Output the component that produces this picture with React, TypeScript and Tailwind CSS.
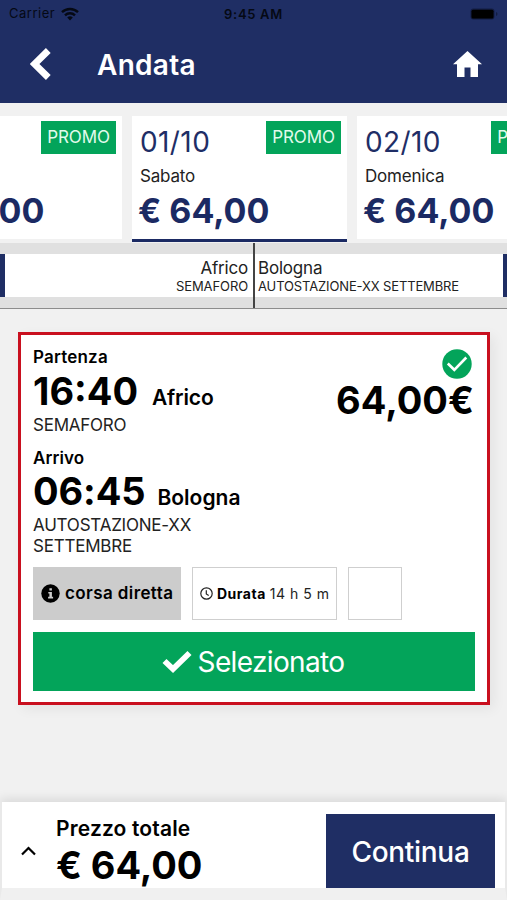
import React from "react";

type DayProps = { date?: string; day?: string; price: string; selected?: boolean };

function DayCard({ date, day, price, selected }: DayProps) {
  return (
    <div
      className={
        "h-[126px] w-[215px] shrink-0 border-b-[3px] bg-white " +
        (selected ? "border-[#1b2a63]" : "border-[#f1f1f1]")
      }
    >
      <div className="flex h-[47px] justify-between pl-[8px]">
        <span className="pt-[12px] text-[28px] leading-[28px] tracking-[0.4px] text-[#1f2e66]">{date}</span>
        <span className="mt-[5px] mr-[6px] flex h-[33px] w-[75px] items-center justify-center bg-[#03a45a] text-[17px] tracking-[-0.1px] text-[#e2fbec]">
          PROMO
        </span>
      </div>
      <div className="h-[25px] pl-[8px] text-[17px] leading-[26px] tracking-[-0.2px] text-[#222]">{day}</div>
      <div className="pt-[4px] pl-[6px] text-[34px] leading-[37px] font-bold text-[#1b2a63]">{price}</div>
    </div>
  );
}

function StatusBar() {
  return (
    <div className="flex h-[28px] items-center pr-[9px] pl-[9px] text-[13px] text-[#050914]">
      <div className="flex w-[166px] items-center gap-[6px]">
        <span className="tracking-[0.5px]">Carrier</span>
        <svg width="18" height="14" viewBox="0 0 18 14" fill="none" stroke="currentColor" strokeWidth="2.4">
          <path d="M1 5.2a11.5 11.5 0 0 1 16 0M4 8.3a7.2 7.2 0 0 1 10 0" />
          <path d="M9 13.6 6.2 10.6a4 4 0 0 1 5.6 0z" fill="currentColor" stroke="none" />
        </svg>
      </div>
      <div className="flex-1 pt-px text-center font-semibold tracking-[0.7px]">9:45 AM</div>
      <div className="flex w-[166px] items-center justify-end">
        <svg width="28" height="12" viewBox="0 0 28 12">
          <rect x="0.5" y="0.5" width="24" height="11" rx="3" fill="#131d42" />
          <rect x="1.5" y="1.7" width="22" height="8.8" rx="1.5" fill="#000" />
          <path d="M26 4v4q1.500-.5 1.500-2t-1.500-2" fill="#131d42" />
        </svg>
      </div>
    </div>
  );
}

export default function App() {
  return (
    <div className="flex h-[900px] w-[507px] flex-col overflow-hidden bg-[#f1f1f1] font-['Inter','Liberation_Sans',sans-serif] text-black">
      <header className="h-[103px] shrink-0 bg-[#1f2e64]">
        <StatusBar />
        <div className="flex h-[72px] items-center pr-[25px] pl-[30px]">
          <svg width="21" height="32" viewBox="0 0 21 32" className="shrink-0">
            <path d="M18.300 2.500 4.500 16l13.800 13.500" fill="none" stroke="#fff" strokeWidth="6.800" />
          </svg>
          <h1 className="ml-[46px] flex-1 pt-[2px] text-[28px] leading-[32px] font-semibold tracking-[0.3px] text-white">
            Andata
          </h1>
          <svg width="29" height="26" viewBox="0 0 29 26" fill="#fff" className="shrink-0">
            <path d="M14.500 0 29 13.300h-4V26h-7.500v-9.500h-6V26H4V13.300H0z" />
          </svg>
        </div>
      </header>

      <section className="flex h-[140px] shrink-0 pt-[13px]">
        <div className="-ml-[93px] flex gap-[10px]">
          <DayCard price="€ 64,00" />
          <DayCard date="01/10" day="Sabato" price="€ 64,00" selected />
          <DayCard date="02/10" day="Domenica" price="€ 64,00" />
        </div>
      </section>

      <section className="flex h-[66px] shrink-0 border-b border-[#8d8d8d] bg-[#e0e0e0] text-[#222]">
        <div className="flex w-[255px] items-stretch border-r-2 border-[#444] py-[11px]">
          <div className="w-[5px] bg-[#1f2e64]" />
          <div className="flex-1 bg-white pt-[4px] pr-[5px] text-right">
            <div className="text-[17px] leading-[21px] tracking-[-0.2px]">Africo</div>
            <div className="text-[13px] leading-[15px] tracking-[-0.1px]">SEMAFORO</div>
          </div>
        </div>
        <div className="flex flex-1 items-stretch py-[11px]">
          <div className="flex-1 bg-white pt-[4px] pl-[3px]">
            <div className="text-[17px] leading-[21px] tracking-[-0.2px]">Bologna</div>
            <div className="text-[13px] leading-[15px] tracking-[-0.13px]">AUTOSTAZIONE-XX SETTEMBRE</div>
          </div>
          <div className="w-[4px] bg-[#1f2e64]" />
        </div>
      </section>

      <main className="flex-1 px-[18px] pt-[23px]">
        <div className="h-[373px] w-[472px] border-[3px] border-[#c9101f] bg-white px-[12px] pt-[12px] shadow-[4px_4px_12px_rgba(0,0,0,0.06)]">
          <div className="flex h-[220px] justify-between">
            <div className="w-[240px]">
              <div className="text-[17px] leading-[20px] font-semibold tracking-[0.2px]">Partenza</div>
              <div className="flex h-[48px] items-baseline gap-[14px] leading-[48px] font-semibold">
                <span className="text-[38px] font-bold">16:40</span>
                <span className="text-[21px] tracking-[-0.15px]">Africo</span>
              </div>
              <div className="text-[17px] leading-[20px] tracking-[-0.25px] text-[#222]">SEMAFORO</div>
              <div className="mt-[13px] text-[17px] leading-[20px] font-semibold tracking-[0.1px]">Arrivo</div>
              <div className="flex h-[47px] items-baseline gap-[12px] leading-[47px] font-semibold">
                <span className="text-[38px] font-bold tracking-[-0.1px]">06:45</span>
                <span className="text-[21px]">Bologna</span>
              </div>
              <div className="w-[200px] text-[17px] leading-[21px] tracking-[-0.22px] text-[#222]">
                AUTOSTAZIONE-XX SETTEMBRE
              </div>
            </div>
            <div className="flex flex-col items-end">
              <svg width="30" height="30" viewBox="0 0 30 30" className="mt-[2px] mr-[3px]">
                <circle cx="15" cy="15" r="14.700" fill="#03a45a" />
                <path d="M5.800 14.500 12.300 20.800 24.300 8.500" fill="none" stroke="#fff" strokeWidth="2.600" />
              </svg>
              <div className="mt-px mr-px text-[38px] leading-[41px] font-bold">64,00€</div>
            </div>
          </div>
          <div className="flex h-[53px] gap-[11px]">
            <div className="flex w-[148px] items-center bg-[#ccc] pl-[8px]">
              <svg width="19" height="19" viewBox="0 0 19 19">
                <circle cx="9.500" cy="9.500" r="9.200" />
                <path d="M8.400 4.200h2.500v2.300H8.400zM7.300 8h3.600v4.800h1.200v1.600H7.100v-1.600h1.300V9.600H7.300z" fill="#ccc" />
              </svg>
              <span className="ml-[5px] pt-px text-[17px] font-semibold tracking-[0.4px] whitespace-nowrap">
                corsa diretta
              </span>
            </div>
            <div className="flex w-[145px] items-center border-[1.5px] border-[#cfcfcf] pl-[7px] text-[14px] whitespace-nowrap">
              <svg width="13" height="13" viewBox="0 0 13 13" fill="none" stroke="#222" strokeWidth="1.200">
                <circle cx="6.500" cy="6.500" r="5.700" />
                <path d="M6.300 3.200v3.800l2.400 1.400" />
              </svg>
              <span className="ml-[4px] font-bold tracking-[0.5px]">Durata</span>
              <span className="ml-[4px] tracking-[0.5px] text-[#222]">14 h 5 m</span>
            </div>
            <div className="w-[54px] border-[1.5px] border-[#cfcfcf]" />
          </div>
          <div className="mt-[12px] flex h-[59px] items-center justify-center bg-[#03a45a] pr-[2px] text-white">
            <svg width="30" height="23" viewBox="0 0 30 23" className="mr-[6px]">
              <path d="M2.500 11 11 19 27.500 3" fill="none" stroke="#fff" strokeWidth="5.800" />
            </svg>
            <span className="text-[28px] leading-[32px] tracking-[-0.65px]">Selezionato</span>
          </div>
        </div>
      </main>

      <footer className="flex h-[98px] shrink-0 border-x-2 border-b-[12px] border-x-[#e9e9e9] border-b-[#f0f0f0] bg-white shadow-[0_-3px_10px_rgba(0,0,0,0.10)]">
        <svg width="15" height="10" viewBox="0 0 15 10" className="mt-[44px] ml-[19px] shrink-0">
          <path d="M1 8.500 7.500 2 14 8.500" fill="none" stroke="#000" strokeWidth="2.200" />
        </svg>
        <div className="ml-[20px] flex-1 pt-[14px]">
          <div className="text-[21px] leading-[25px] font-semibold tracking-[0.15px]">Prezzo totale</div>
          <div className="text-[38px] leading-[48px] font-bold tracking-[-0.1px]">€ 64,00</div>
        </div>
        <button className="mt-[12px] mr-[10px] h-[74px] w-[169px] bg-[#1f2e64] text-[28px] leading-[76px] font-medium tracking-[-0.3px] text-white">
          Continua
        </button>
      </footer>
    </div>
  );
}
